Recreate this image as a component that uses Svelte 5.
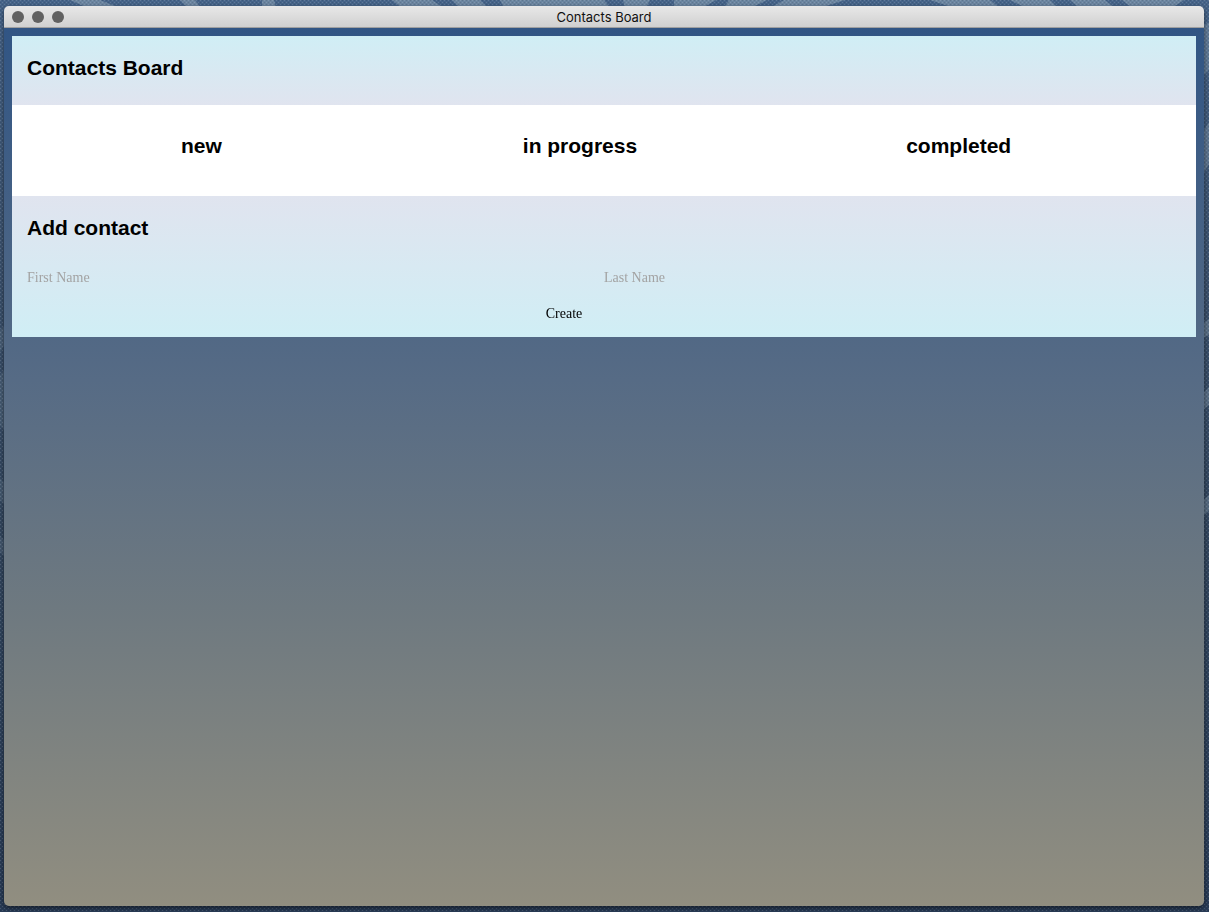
<script>
  let firstName = $state('');
  let lastName = $state('');
  const columns = ['new', 'in progress', 'completed'];
</script>

<div class="desktop">
  <svg class="wallpaper" viewBox="0 0 1209 912" preserveAspectRatio="none" aria-hidden="true">
    <defs>
      <linearGradient id="base" x2="0" y2="1">
        <stop offset="0" stop-color="#466489" />
        <stop offset=".25" stop-color="#3d5471" />
        <stop offset=".6" stop-color="#33475f" />
        <stop offset="1" stop-color="#293c57" />
      </linearGradient>
      <pattern id="weave" width="4" height="4" patternUnits="userSpaceOnUse">
        <path d="M0 0h1v1H0zM2 2h1v1H2z" fill="#fff" opacity=".14" />
        <path d="M2 0h1v1H2zM0 2h1v1H0z" fill="#000" opacity=".1" />
      </pattern>
    </defs>
    <rect width="1209" height="912" fill="url(#base)" />
    <g fill="#8fa6b8" opacity=".5">
      <path d="M70 0h30l20 8H88zM180 0h15l6 8h-13zM262 0h12l2 8h-14zM392 0h40l12 8h-42zM452 0h28l8 8h-28zM500 0h104l6 8H504z" />
      <path d="M623 0h27l-4 8h-21zM674 0h42l-14 8h-28zM729 0h38l-16 8h-27zM784 0h61l-25 8h-50zM930 0h60l10 8h-46zM1010 0h40l8 8h-32zM1070 0h35l10 8h-36zM1122 0h62l-12 8h-40z" />
    </g>
    <g fill="#8fa6b8" opacity=".38">
      <path d="M1203 26l6-4v48l-6 6zM1203 132l6-10v42l-6 10zM1203 323l6-4v16l-6 3zM1203 393l6-6v18l-6 5zM1203 500l6-5v16l-6 5z" />
      <path d="M0 330l4-4v20l-4 6zM0 375l4-5v60l-4-4zM0 478l4 4v22l-4-4zM0 536l4 4v16l-4-4z" opacity=".5" />
    </g>
    <rect width="1209" height="912" fill="url(#weave)" />
  </svg>
  <section class="window">
    <div class="titlebar">
      <div class="controls"><i></i><i></i><i></i></div>
      <span>Contacts Board</span>
    </div>
    <main>
      <header><h1>Contacts Board</h1></header>
      <div class="board">
        {#each columns as column}
          <h2>{column}</h2>
        {/each}
      </div>
      <form onsubmit={(e) => e.preventDefault()}>
        <h2>Add contact</h2>
        <div class="fields">
          <input aria-label="First Name" placeholder="First Name" bind:value={firstName} />
          <input aria-label="Last Name" placeholder="Last Name" bind:value={lastName} />
        </div>
        <div class="actions"><button type="submit">Create</button></div>
      </form>
    </main>
  </section>
</div>

<style>
  :global(body) { margin: 0; }
  .desktop {
    position: relative;
    box-sizing: border-box;
    min-height: 100vh;
    display: flex;
    padding: 6px 5px 6px 4px;
  }
  .wallpaper {
    position: absolute;
    inset: 0;
    width: 100%;
    height: 100%;
  }
  .window {
    position: relative;
    flex: 1;
    display: flex;
    flex-direction: column;
    border-radius: 5px;
    overflow: hidden;
    box-shadow: 0 2px 5px #0008;
  }
  .titlebar {
    box-sizing: border-box;
    height: 22px;
    display: grid;
    grid-template-columns: 1fr auto 1fr;
    align-items: center;
    padding: 0 8px;
    background: linear-gradient(#e8e8e8, #d0d0d0);
    border-bottom: 1px solid #a0a0a0;
    font: 13px/20px Inter, sans-serif;
    color: #111;
  }
  .controls { display: flex; gap: 8px; }
  i { width: 12px; height: 12px; border-radius: 50%; background: #616161; }
  main {
    flex: 1;
    padding: 8px;
    background: linear-gradient(#315584, #566b85 40%, #6e7980 66%, #918e80);
  }
  h1, h2 { margin: 0; font: bold 21px/26px "Liberation Sans", Arial, sans-serif; color: #000; }
  header { padding: 19px 15px 24px; background: linear-gradient(#d0eef5, #e0e4ef); }
  .board {
    display: grid;
    grid-template-columns: repeat(3, 1fr);
    padding: 28px 48px 37px 0;
    background: #fff;
    text-align: center;
  }
  form { padding: 19px 15px 13px; background: linear-gradient(#e0e4ef, #d0eef5); }
  .fields { display: grid; grid-template-columns: 1fr 1fr; margin: 27px 0 16px; }
  .actions { display: flex; justify-content: center; padding-right: 80px; }
  input, button {
    box-sizing: border-box;
    border: 0;
    padding: 0;
    height: 20px;
    background: none;
    color: #000;
    font: 14px/20px "Liberation Serif", "Times New Roman", serif;
  }
  input::placeholder { color: #a3a3a3; opacity: 1; }
</style>
